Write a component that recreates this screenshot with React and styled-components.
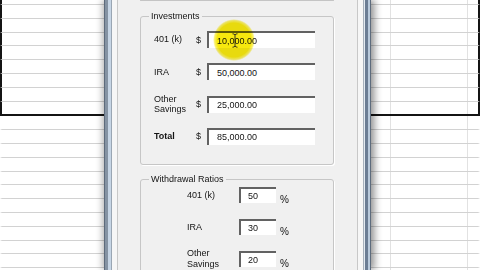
import React from "react";
import styled, { createGlobalStyle } from "styled-components";

const GlobalStyle = createGlobalStyle`
  html, body { margin: 0; padding: 0; background: #fff; }
  body { font-family: "Liberation Sans", Arial, sans-serif; }
`;

const INVESTMENTS = [
  { label: ["401 (k)"], value: "10,000.00", cursor: true },
  { label: ["IRA"], value: "50,000.00" },
  { label: ["Other", "Savings"], value: "25,000.00" },
  { label: ["Total"], value: "85,000.00", bold: true },
];

const RATIOS = [
  { label: ["401 (k)"], value: "50" },
  { label: ["IRA"], value: "30" },
  { label: ["Other", "Savings"], value: "20" },
];

// spreadsheet row heights, grid lines every ~13.8px starting at y=4
const ROW_EDGES = Array.from({ length: 21 }, (_, i) => Math.round(4 + 13.8 * i) + 1);
const ROW_HEIGHTS = ROW_EDGES.map((e, i) => e - (i ? ROW_EDGES[i - 1] : 0));
const SELECTED_ROWS = 9;

const Sheet = styled.div`
  position: relative;
  width: 480px;
  height: 270px;
  overflow: hidden;
  background-color: #fff;
  background-image: linear-gradient(
    to right,
    transparent 390px,
    #e2e2e2 390px 391px,
    transparent 391px 467px,
    #e2e2e2 467px 468px,
    transparent 468px
  );
`;

const SheetRow = styled.div`
  box-sizing: border-box;
  border-bottom: ${({ last }) => (last ? "2px solid #141414" : "1px solid #d2d2d2")};
  border-left: 2px solid ${({ selected }) => (selected ? "#141414" : "transparent")};
  border-right: 2px solid ${({ selected }) => (selected ? "#141414" : "transparent")};
`;

const Window = styled.div`
  position: absolute;
  top: 0;
  left: 104px;
  width: 267px;
  height: 270px;
  display: flex;
  box-shadow: 4px 0 7px rgba(0, 0, 0, 0.38), -3px 0 6px rgba(0, 0, 0, 0.2);
`;

const FrameSide = styled.div`
  width: 8px;
  flex: none;
  background: ${({ side }) =>
    side === "left"
      ? "linear-gradient(to right, #5d6b7c 0 1px, #8593a3 1px 4px, #c6d5e5 4px 7px, #9aa6b3 7px)"
      : "linear-gradient(to right, #a6b0bb 0 1px, #e3eaf1 1px 2px, #6b7d94 2px 5px, #b9cadc 5px 7px, #5d6b7c 7px)"};
`;

const Client = styled.div`
  flex: 1;
  display: flex;
  padding: 0 5px;
  background: #f6f6f6;
`;

const Panel = styled.div`
  flex: 1;
  display: flex;
  flex-direction: column;
  padding: 0 23px 0 22px;
  background: #f0f0f0;
  border-left: 1px solid #c8c8c8;
  border-right: 1px solid #c8c8c8;
`;

const PrevGroup = styled.div`
  width: 194px;
  height: 1px;
  box-sizing: border-box;
  border: 1px solid #c4c4c4;
  border-top: none;
  border-radius: 0 0 3px 3px;
`;

const Group = styled.fieldset`
  margin: ${({ gap }) => gap}px 0 0;
  padding: 0;
  width: 194px;
  min-inline-size: 0;
  box-sizing: border-box;
  border: 1px solid #c6c6c6;
  border-radius: 3px;
  box-shadow: 1px 1px 0 #fff;
`;

const Legend = styled.legend`
  margin-left: 8px;
  padding: 0 2px;
  font-size: 9px;
  line-height: 11px;
  color: #141414;
`;

const Rows = styled.div`
  display: grid;
  grid-template-columns: ${({ cols }) => cols};
  grid-auto-rows: ${({ rowH }) => rowH}px;
  row-gap: ${({ rowGap }) => rowGap}px;
  align-items: center;
  padding: ${({ pad }) => pad};
`;

const Label = styled.div`
  font-size: 9px;
  line-height: 10.5px;
  color: #141414;
  font-weight: ${({ bold }) => (bold ? 700 : 400)};
  span {
    display: block;
  }
`;

const Dollar = styled.div`
  font-size: 9px;
  color: #141414;
`;

const Field = styled.div`
  position: relative;
  height: 100%;
  box-sizing: border-box;
  display: flex;
  align-items: center;
  padding-left: ${({ inset }) => inset}px;
  background: #fff;
  border-top: 2px solid #626262;
  border-left: 2px solid #626262;
  font-size: 9px;
  color: #141414;
`;

const Percent = styled.div`
  align-self: end;
  margin-left: 4px;
  margin-bottom: -2px;
  font-size: 10px;
  color: #141414;
`;

const Highlight = styled.div`
  position: absolute;
  left: 4px;
  top: -14px;
  width: 42px;
  height: 42px;
  border-radius: 50%;
  background: radial-gradient(
    circle,
    #f7e80e 0 17px,
    rgba(247, 232, 14, 0.6) 19.5px,
    rgba(247, 232, 14, 0) 21px
  );
  mix-blend-mode: multiply;
  pointer-events: none;
`;

const Caret = styled.svg`
  position: absolute;
  left: 23px;
  top: 0;
`;

function IBeam() {
  return (
    <Caret width="6" height="15" viewBox="0 0 6 15">
      <path
        d="M0.5 0.8c1 0 2 .3 2.5 1 .5-.7 1.5-1 2.5-1M3 1.8v11.4M0.5 14.2c1 0 2-.3 2.5-1 .5.7 1.5 1 2.5 1"
        fill="none"
        stroke="#222"
        strokeWidth="0.9"
      />
    </Caret>
  );
}

function LabelText({ lines, bold }) {
  return (
    <Label bold={bold}>
      {lines.map((l) => (
        <span key={l}>{l}</span>
      ))}
    </Label>
  );
}

export default function App() {
  return (
    <>
      <GlobalStyle />
      <Sheet>
        {ROW_HEIGHTS.map((h, i) => (
          <SheetRow
            key={i}
            style={{ height: h + (i === SELECTED_ROWS - 1 ? 1 : 0) }}
            selected={i < SELECTED_ROWS}
            last={i === SELECTED_ROWS - 1}
          />
        ))}
        <Window>
          <FrameSide side="left" />
          <Client>
            <Panel>
              <PrevGroup />
              <Group gap={10}>
                <Legend>Investments</Legend>
                <Rows cols="42px 11px 108px" rowH={17} rowGap={15.3} pad="9px 0 19px 13px">
                  {INVESTMENTS.map((row) => (
                    <React.Fragment key={row.label.join(" ")}>
                      <LabelText lines={row.label} bold={row.bold} />
                      <Dollar>$</Dollar>
                      <Field inset={8}>
                        {row.value}
                        {row.cursor && (
                          <>
                            <Highlight />
                            <IBeam />
                          </>
                        )}
                      </Field>
                    </React.Fragment>
                  ))}
                </Rows>
              </Group>
              <Group gap={9}>
                <Legend>Withdrawal Ratios</Legend>
                <Rows cols="52px 37px auto" rowH={16} rowGap={16} pad="2px 0 20px 46px">
                  {RATIOS.map((row) => (
                    <React.Fragment key={row.label.join(" ")}>
                      <LabelText lines={row.label} />
                      <Field inset={7}>{row.value}</Field>
                      <Percent>%</Percent>
                    </React.Fragment>
                  ))}
                </Rows>
              </Group>
            </Panel>
          </Client>
          <FrameSide side="right" />
        </Window>
      </Sheet>
    </>
  );
}
